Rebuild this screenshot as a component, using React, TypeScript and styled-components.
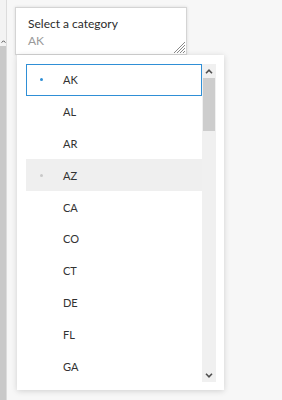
import styled, { createGlobalStyle } from "styled-components";

const Global = createGlobalStyle`
  html, body {
    margin: 0;
    padding: 0;
    background: #f7f7f7;
    font-family: "Lato", "Open Sans", sans-serif;
  }
`;

const Page = styled.div`
  width: 282px;
  height: 400px;
  display: flex;
  overflow: hidden;
`;

const SideBar = styled.div`
  width: 6px;
  display: flex;
  flex-direction: column;
  border-right: 1px solid #dcdcdc;
`;

const SideTrack = styled.div`
  height: 46px;
  background: #f3f3f3;
  display: flex;
  align-items: flex-end;
  justify-content: center;
  padding-bottom: 3px;
  box-sizing: border-box;
`;

const SideThumb = styled.div`
  flex: 1;
  background: #c9c9c9;
`;

const Main = styled.div`
  position: relative;
  flex: 1;
  padding: 7px 0 0 8px;
`;

const Card = styled.div`
  position: relative;
  width: 172px;
  height: 48px;
  box-sizing: border-box;
  background: #fff;
  border: 1px solid #d4d4d4;
  box-shadow: 0 0 3px rgba(0, 0, 0, 0.12);
  padding: 8px 12px;
  display: flex;
  flex-direction: column;
  gap: 1px;
`;

const Label = styled.span`
  font-size: 12px;
  color: #2b2b2b;
  line-height: 16px;
`;

const Value = styled.span`
  font-size: 12px;
  color: #9a9a9a;
  line-height: 16px;
`;

const Grip = styled.svg`
  position: absolute;
  right: 1px;
  bottom: 1px;
`;

const Popover = styled.div`
  position: absolute;
  top: 55px;
  left: 10px;
  width: 207px;
  height: 335px;
  background: #fff;
  box-shadow: 0 1px 6px rgba(0, 0, 0, 0.16);
  display: flex;
  padding: 9px 8px 8px 9px;
  box-sizing: border-box;
`;

const List = styled.div`
  flex: 1;
  display: flex;
  flex-direction: column;
`;

const Item = styled.div<{ $selected?: boolean; $hover?: boolean }>`
  height: 31.8px;
  flex: none;
  box-sizing: border-box;
  display: flex;
  align-items: center;
  font-size: 11px;
  color: #323232;
  border: 1px solid ${(p) => (p.$selected ? "#2f8fd6" : "transparent")};
  background: ${(p) => (p.$hover ? "#efefef" : "transparent")};
`;

const Dot = styled.span<{ $color: string }>`
  width: 3px;
  height: 3px;
  border-radius: 50%;
  margin: 0 20px 0 13px;
  background: ${(p) => p.$color};
`;

const ScrollBar = styled.div`
  width: 14px;
  display: flex;
  flex-direction: column;
  background: #f0f0f0;
`;

const Arrow = styled.div`
  height: 14px;
  display: flex;
  align-items: center;
  justify-content: center;
`;

const Thumb = styled.div`
  height: 53px;
  margin: 0 1px;
  background: #cdcdcd;
`;

const Spacer = styled.div`
  flex: 1;
`;

const Chevron = ({ up, size = 8 }: { up?: boolean; size?: number }) => (
  <svg width={size} height={size * 0.625} viewBox="0 0 8 5">
    <path
      d={up ? "M1 4.2 L4 1.2 L7 4.2" : "M1 0.8 L4 3.8 L7 0.8"}
      stroke="#505050"
      strokeWidth="1.6"
      fill="none"
    />
  </svg>
);

const states = ["AK", "AL", "AR", "AZ", "CA", "CO", "CT", "DE", "FL", "GA"];

export default function App() {
  return (
    <Page>
      <Global />
      <SideBar>
        <SideTrack>
          <Chevron up size={5} />
        </SideTrack>
        <SideThumb />
      </SideBar>
      <Main>
        <Card>
          <Label>Select a category</Label>
          <Value>AK</Value>
          <Grip width="11" height="11" viewBox="0 0 11 11">
            {[0, 3, 6, 9].map((o) => (
              <line
                key={o}
                x1={11}
                y1={o}
                x2={o}
                y2={11}
                stroke="#8a8a8a"
                strokeWidth="1"
              />
            ))}
          </Grip>
        </Card>
        <Popover>
          <List>
            {states.map((s) => (
              <Item key={s} $selected={s === "AK"} $hover={s === "AZ"}>
                <Dot
                  $color={
                    s === "AK" ? "#2f8fd6" : s === "AZ" ? "#c8c8c8" : "transparent"
                  }
                />
                {s}
              </Item>
            ))}
          </List>
          <ScrollBar>
            <Arrow>
              <Chevron up />
            </Arrow>
            <Thumb />
            <Spacer />
            <Arrow>
              <Chevron />
            </Arrow>
          </ScrollBar>
        </Popover>
      </Main>
    </Page>
  );
}
